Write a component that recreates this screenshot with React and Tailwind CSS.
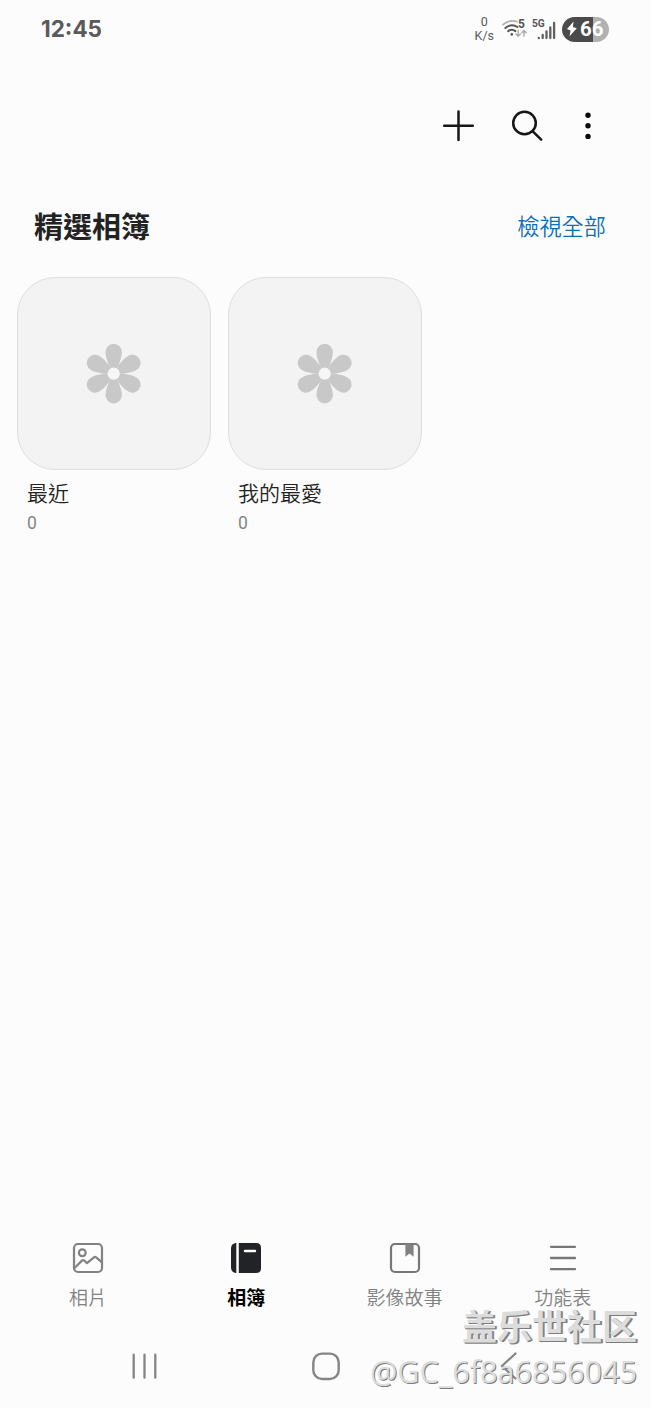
import { useState } from "react";

const albums = [
  { id: "recent", name: "最近", count: 0 },
  { id: "favorite", name: "我的最愛", count: 0 },
];

const PlusIcon = () => (
  <svg width="32" height="32" viewBox="0 0 32 32" fill="none" stroke="#171717" strokeWidth="2.5" strokeLinecap="round">
    <path d="M15.5 1.5V30M1.2 15.7H29.8" />
  </svg>
);

const SearchIcon = () => (
  <svg width="32" height="32" viewBox="0 0 32 32" fill="none" stroke="#171717" strokeWidth="2.5" strokeLinecap="round">
    <circle cx="13.5" cy="13" r="11.3" />
    <path d="M21.5 21.2L30.2 29.7" />
  </svg>
);

const MoreIcon = () => (
  <svg width="8" height="32" viewBox="0 0 8 32" fill="#0a0a0a">
    <circle cx="4" cy="5.2" r="2.7" />
    <circle cx="4" cy="15.8" r="2.7" />
    <circle cx="4" cy="26.4" r="2.7" />
  </svg>
);

const Flower = () => (
  <svg width="60" height="60" viewBox="-29.7 -29.7 60 60">
    {[0, 60, 120, 180, 240, 300].map((angle) => (
      <path
        key={angle}
        transform={`rotate(${angle})`}
        fill="#c8c8c8"
        d="M0 0L-5 -8.7C-6.6 -13.5 -8.2 -17 -8.2 -21.6A8.2 8.2 0 0 1 8.2 -21.6C8.2 -17 6.6 -13.5 5 -8.7Z"
      />
    ))}
    <circle r="6.1" fill="#f6f6f6" />
  </svg>
);

const PhotoIcon = () => (
  <svg width="32" height="32" viewBox="0 0 32 32" fill="none" stroke="#828282" strokeWidth="2.2" strokeLinejoin="round">
    <rect x="2" y="2" width="28" height="28" rx="4" />
    <circle cx="10.3" cy="10.8" r="3.4" />
    <path d="M2.5 26L10.2 18.4Q11.2 17.6 12.2 18.5L15 21.2L22.3 15.2Q23.3 14.4 24.2 15.3L30 20.4" />
  </svg>
);

const AlbumIcon = () => (
  <svg width="32" height="32" viewBox="0 0 32 32" fill="#222326">
    <path d="M6.3 1V31H5.5Q1 30.2 1 25.5V6.5Q1 1.8 5.5 1Z" />
    <path d="M8.8 1H26.2Q31 1 31 5.8V26.2Q31 31 26.2 31H8.8Z" />
    <path d="M15 9H25" stroke="#fff" strokeWidth="2.4" strokeLinecap="round" />
  </svg>
);

const StoryIcon = () => (
  <svg width="32" height="32" viewBox="0 0 32 32" fill="none" stroke="#777" strokeWidth="2.2">
    <rect x="2" y="2" width="28" height="28" rx="4" />
    <path d="M16.4 2H24.6V14.8L20.5 11.4L16.4 14.8Z" fill="#828282" stroke="none" />
  </svg>
);

const MenuIcon = () => (
  <svg width="32" height="32" viewBox="0 0 32 32" stroke="#777" strokeWidth="2.3" strokeLinecap="round">
    <path d="M4 4.8H28M4 16H28M4 27.2H28" />
  </svg>
);

const WifiIcon = () => (
  <svg width="26" height="22" viewBox="0 0 26 22" fill="none" strokeLinecap="round">
    <path d="M1 6.7Q7.5 1 15 3.6" stroke="#b0b0b0" strokeWidth="1.7" />
    <path d="M3.4 10Q9.5 5 15.4 9" stroke="#555" strokeWidth="2" />
    <path d="M6.2 13.2Q9.8 10.4 13.4 13.1" stroke="#555" strokeWidth="2" />
    <circle cx="9.8" cy="16.4" r="1.3" fill="#555" />
    <text x="16" y="10.4" fontSize="12" fontWeight="700" fontFamily="Roboto, sans-serif" fill="#555">
      5
    </text>
    <path d="M16.2 12.5V18M14 16L16.2 18.3L18.4 16M22 18.3V12.7M19.8 14.7L22 12.4L24.2 14.7" stroke="#aaa" strokeWidth="1.4" />
  </svg>
);

const SignalIcon = () => (
  <svg width="25" height="24" viewBox="0 0 25 24">
    <text x="0" y="10" fontSize="10.2" fontWeight="700" fontFamily="Roboto, sans-serif" fill="#555">
      5G
    </text>
    <g stroke="#606060" strokeWidth="2.3" strokeLinecap="round">
      <path d="M6.8 21V21.2M10.7 18V21M14.5 14.3V21M18.3 10.5V21M22.1 6V21" />
    </g>
  </svg>
);

const StatusBar = () => (
  <header className="flex h-[58px] items-center justify-between pl-[41px] pr-[41px] text-[#5a5a5a]">
    <span className="font-[Inter,sans-serif] text-[22.5px] font-bold leading-none">12:45</span>
    <div className="flex items-center">
      <div className="mr-2 flex flex-col items-center font-[Roboto,sans-serif] text-[12.5px] leading-[14px]">
        <span>0</span>
        <span>K/s</span>
      </div>
      <WifiIcon />
      <div className="ml-1 mr-[5px]">
        <SignalIcon />
      </div>
      <div className="flex h-[25px] w-[47px] items-center rounded-full bg-linear-to-r from-[#4b4b4b] from-66% to-[#b1b1b1] to-66% pl-1">
        <svg width="12" height="16" viewBox="0 0 11 15" fill="#fff">
          <path d="M7 0.5L0.8 7.6L4.2 9L3.2 14.3L10 6.9L6.3 5.7Z" />
        </svg>
        <span className="ml-[2px] font-[Roboto,sans-serif] text-[20.5px] font-bold leading-none text-white">66</span>
      </div>
    </div>
  </header>
);

const tabs = [
  { id: "photos", label: "相片", Icon: PhotoIcon },
  { id: "albums", label: "相簿", Icon: AlbumIcon },
  { id: "stories", label: "影像故事", Icon: StoryIcon },
  { id: "menu", label: "功能表", Icon: MenuIcon },
];

const BottomTabs = () => {
  const [active, setActive] = useState("albums");

  return (
    <nav className="mr-2 ml-[9px] grid grid-cols-4">
      {tabs.map(({ id, label, Icon }) => (
        <button key={id} onClick={() => setActive(id)} className="flex flex-col items-center">
          <Icon />
          <span
            className={
              active === id
                ? "mt-[9px] text-[19px] font-bold leading-7 text-black"
                : "mt-[9px] text-[19px] font-[350] leading-7 text-[#828282]"
            }
          >
            {label}
          </span>
        </button>
      ))}
    </nav>
  );
};

const SystemNav = () => (
  <div className="mt-[39px] mr-[51px] ml-[54px] grid grid-cols-3 justify-items-center">
    <svg width="32" height="32" viewBox="0 0 32 32" stroke="#858585" strokeWidth="2.3" strokeLinecap="round">
      <path d="M4.7 4.7V27.7M15.5 4.7V27.7M26.3 4.7V27.7" />
    </svg>
    <svg width="32" height="32" viewBox="0 0 32 32" fill="none" stroke="#858585" strokeWidth="2.4">
      <rect x="3.3" y="3.6" width="25.4" height="25.4" rx="8.8" />
    </svg>
    <svg width="32" height="32" viewBox="0 0 32 32" fill="none" stroke="#858585" strokeWidth="2.2" strokeLinecap="round">
      <path d="M23.5 3.5L10 16L23.5 28.5" />
    </svg>
  </div>
);

const Watermark = () => (
  <div className="pointer-events-none absolute right-[13px] bottom-0 flex h-[106px] flex-col items-end whitespace-nowrap text-[#dcdcdc]">
    <span className="font-['Noto_Sans_CJK_SC',sans-serif] text-[35px] font-bold leading-[46px] [text-shadow:1px_1px_0_#7c7c7c,2px_1px_0_#8c8c8c]">
      盖乐世社区
    </span>
    <span className="font-['Open_Sans','Noto_Sans',sans-serif] text-[30.6px] leading-[46px] [text-shadow:1px_1px_0_#7c7c7c]">
      @GC_6f8a6856045
    </span>
  </div>
);

const App = () => {
  return (
    <div className="relative flex h-[1408px] w-[650px] flex-col overflow-hidden bg-[#fcfcfc] font-['Noto_Sans_CJK_TC',sans-serif] text-[#222]">
      <StatusBar />

      <div className="mt-[52px] flex h-8 items-center justify-end pr-[58px]">
        <button aria-label="Add">
          <PlusIcon />
        </button>
        <button aria-label="Search" className="ml-9">
          <SearchIcon />
        </button>
        <button aria-label="More" className="ml-[41px]">
          <MoreIcon />
        </button>
      </div>

      <div className="mt-[63px] flex h-10 items-center justify-between pr-11 pl-[34px]">
        <h1 className="text-[29px] font-bold leading-10">精選相簿</h1>
        <a className="text-[22.2px] font-[350] leading-8 text-[#0d6eb8]">檢視全部</a>
      </div>

      <div className="mt-8 flex gap-[17px] pl-[17px]">
        {albums.map((album) => (
          <div key={album.id} className="w-[194px]">
            <div className="flex h-[193px] items-center justify-center rounded-[38px] border border-[#dedede] bg-[#f3f3f3]">
              <Flower />
            </div>
            <p className="mt-[6px] pl-[10px] text-[21px] font-[350] leading-8">{album.name}</p>
            <p className="mt-px pl-[10px] font-[Roboto,sans-serif] text-[17.5px] leading-7 text-[#858585]">{album.count}</p>
          </div>
        ))}
      </div>

      <div className="mt-auto h-[166px]">
        <BottomTabs />
        <SystemNav />
      </div>

      <Watermark />
    </div>
  );
};

export default App;
